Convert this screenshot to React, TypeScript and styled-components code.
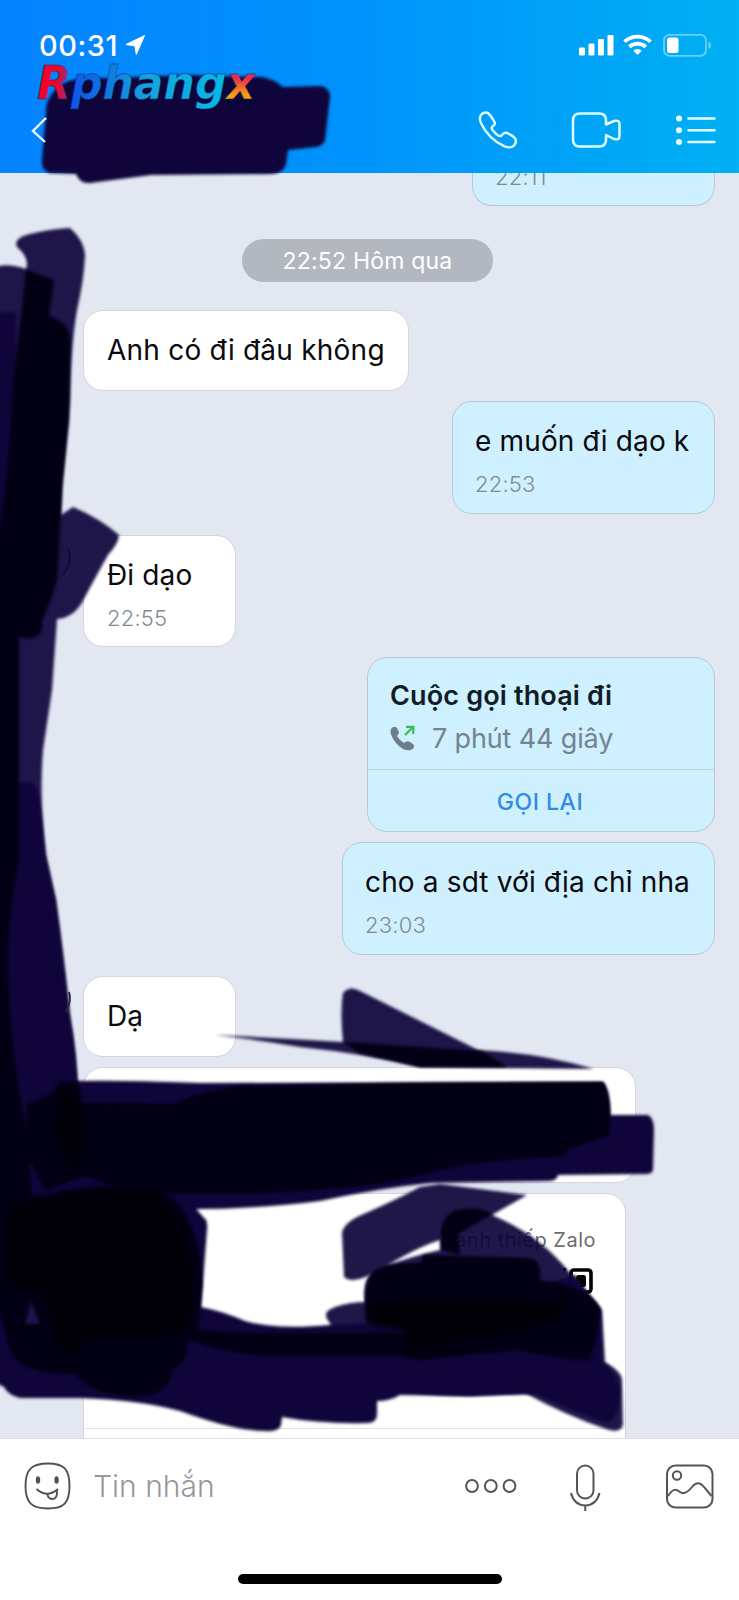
import React from 'react';
import styled, { createGlobalStyle } from 'styled-components';

const Global = createGlobalStyle`
  * { box-sizing: border-box; }
  body { margin: 0; background: #fff; }
`;

const Screen = styled.main`
  position: relative;
  display: flex;
  flex-direction: column;
  width: 739px;
  height: 1600px;
  overflow: hidden;
  background: #fff;
  font-family: Inter, 'Liberation Sans', sans-serif;
  color: #080a0d;
`;

const Header = styled.header`
  flex: none;
  height: 173px;
  padding: 27px 22px 0 31px;
  background: linear-gradient(90deg, #0583ff 0%, #0093fc 48%, #00b0f3 100%);
  color: #fff;
`;

const StatusBar = styled.div`
  display: flex;
  align-items: center;
  height: 36px;
  padding: 0 6px 0 8px;
`;

const Clock = styled.span`
  margin-right: 7px;
  font-size: 29px;
  font-weight: 500;
  letter-spacing: 0.5px;
`;

const Spacer = styled.div`
  flex: 1;
`;

const NavBar = styled.nav`
  display: flex;
  align-items: center;
  height: 44px;
  margin-top: 45px;
`;

const NavActions = styled.div`
  display: flex;
  align-items: center;
  gap: 52px;
`;

const Chat = styled.section`
  flex: none;
  display: flex;
  flex-direction: column;
  height: 1266px;
  padding: 0 24px 0 83px;
  overflow: hidden;
  background: #e2e7f1;
  border-bottom: 1px solid #dcdee3;
`;

const Bubble = styled.article<{ $mine?: boolean; $w: number; $h: number; $gap?: number }>`
  flex: none;
  align-self: ${(p) => (p.$mine ? 'flex-end' : 'flex-start')};
  width: ${(p) => p.$w}px;
  height: ${(p) => p.$h}px;
  margin-top: ${(p) => p.$gap ?? 0}px;
  padding: 22px 22px 0 ${(p) => (p.$mine ? 22 : 23)}px;
  border: 1.5px solid ${(p) => (p.$mine ? '#b2cdd9' : '#d5d6da')};
  border-radius: 20px;
  background: ${(p) => (p.$mine ? '#cff0ff' : '#fff')};
  white-space: nowrap;
`;

const ClippedBubble = styled(Bubble)`
  border-top: 0;
  border-radius: 0 0 20px 20px;
  padding-top: 0;
`;

const Text = styled.p<{ $track?: number }>`
  margin: 0;
  font-size: 28px;
  line-height: 34px;
  letter-spacing: ${(p) => p.$track ?? 0.15}px;
`;

const Time = styled.time<{ $top?: number }>`
  display: block;
  margin-top: ${(p) => p.$top ?? 13}px;
  font-size: 22px;
  line-height: 26px;
  font-weight: 300;
  letter-spacing: 0.2px;
  color: #7f8b94;
`;

const DayPill = styled.div`
  flex: none;
  align-self: flex-start;
  display: flex;
  align-items: center;
  justify-content: center;
  width: 251px;
  height: 43px;
  margin: 33px 0 0 159px;
  border-radius: 22px;
  background: #b3b7bf;
  color: #fff;
  font-size: 23px;
  letter-spacing: 0.2px;
`;

const CallCard = styled(Bubble)`
  display: flex;
  flex-direction: column;
  padding: 0;
`;

const CallInfo = styled.div`
  height: 112px;
  padding: 21px 22px 0;
  border-bottom: 1px solid #b9d8e5;
`;

const CallTitle = styled.h2`
  margin: 0;
  font-size: 27px;
  line-height: 34px;
  font-weight: 600;
  letter-spacing: 0.15px;
  color: #111d26;
`;

const CallMeta = styled.div`
  display: flex;
  align-items: center;
  gap: 17px;
  height: 42px;
  margin-top: 4px;
  font-size: 27px;
  letter-spacing: -0.15px;
  color: #74838f;
`;

const CallBack = styled.button`
  flex: 1;
  padding: 2px 2px 0 0;
  border: 0;
  background: none;
  font: 500 23px Inter, sans-serif;
  letter-spacing: 0.5px;
  color: #318ce2;
`;

const ContactCard = styled(Bubble)`
  display: flex;
  flex-direction: column;
  align-items: flex-end;
  padding: 33px 0 0;
`;

const CardLabel = styled.span`
  margin-right: 29px;
  font-size: 20px;
  line-height: 26px;
  letter-spacing: 0.5px;
  color: #6a6c70;
`;

const CardCode = styled.svg`
  flex: none;
  margin: 14px 32px 0 0;
`;

const CardFooter = styled.div`
  width: 100%;
  height: 30px;
  margin-top: auto;
  border-top: 1px solid #e5e6e8;
`;

const Composer = styled.footer`
  display: flex;
  align-items: center;
  height: 93px;
  padding: 0 25px 0 24px;
`;

const Placeholder = styled.span`
  flex: 1;
  margin-left: 21px;
  font-size: 30px;
  font-weight: 300;
  color: #94979c;
`;

const HomeBar = styled.div`
  width: 264px;
  height: 10px;
  margin: 42px 0 0 238px;
  border-radius: 5px;
  background: #000;
`;

const Overlay = styled.svg`
  position: absolute;
  inset: 0;
  pointer-events: none;
`;

const Ink = () => (
  <Overlay width="739" height="1600" viewBox="0 0 739 1600">
    <defs>
      <filter id="soft" x="-5%" y="-5%" width="110%" height="110%" colorInterpolationFilters="sRGB">
        <feGaussianBlur stdDeviation="1.5" />
      </filter>
      <filter id="softer" x="-5%" y="-5%" width="110%" height="110%" colorInterpolationFilters="sRGB">
        <feGaussianBlur stdDeviation="4" />
      </filter>
      <linearGradient id="word" gradientUnits="userSpaceOnUse" x1="68" y1="0" x2="228" y2="0">
        <stop offset="0" stopColor="#0b52ee" />
        <stop offset=".22" stopColor="#0f74dc" />
        <stop offset=".5" stopColor="#16a4dc" />
        <stop offset="1" stopColor="#04b8e6" />
      </linearGradient>
      <linearGradient id="red" gradientUnits="userSpaceOnUse" x1="37" y1="0" x2="70" y2="0">
        <stop offset=".62" stopColor="#f0042c" />
        <stop offset="1" stopColor="#7c3a90" />
      </linearGradient>
      <linearGradient id="fire" gradientUnits="userSpaceOnUse" x1="0" y1="73" x2="0" y2="99">
        <stop offset=".2" stopColor="#e82c50" />
        <stop offset=".85" stopColor="#f5a00c" />
      </linearGradient>
    </defs>

    {/* single passes of the marker */}
    <g filter="url(#soft)" fill="#0b0138" opacity=".91">
      <path d="M-6 268Q5 262 26 269Q30 258 17 247Q13 238 30 234Q50 229 70 228Q84 240 85 255Q84 280 77 310Q71 345 70 400L62 480L61 515L73 507Q99 518 119 535Q119 543 108 555Q94 580 85 597Q75 618 57 619L52 690L43 750Q39 800 46 855L56 900Q63 950 70 1015Q77 1055 78 1100L-6 1100Z" />
      <path d="M215 1035Q280 1038 343 1042Q340 1012 343 993Q350 985 360 991L478 1050Q540 1053 594 1069L420 1067Q360 1053 300 1047Q260 1040 215 1035Z" />
      <path d="M440 1184L527 1195L492 1215Q540 1235 570 1273L602 1310L605 1362Q622 1372 622 1380L623 1425Q620 1434 606 1429Q565 1415 525 1393L470 1396Q330 1395 330 1323Q320 1312 335 1307Q350 1302 365 1302Q362 1280 372 1274Q352 1284 344 1277L342 1232Q345 1223 357 1217Q400 1198 420 1187ZM440 1240Q420 1246 386 1266Q416 1255 440 1250Z" fillRule="evenodd" />
    </g>

    {/* denser areas */}
    <g filter="url(#soft)" fill="#10053a">
      <path d="M50 97Q60 80 80 79L190 75L262 77Q274 79 283 87L320 86Q330 87 330 97L325 140Q323 146 316 147L288 150L286 164Q284 173 272 174L151 175L90 183Q80 184 76 174L50 173Q41 171 42 160L46 112Q46 102 50 97Z" />
      <path d="M-6 312H16V782H28Q36 782 38 795Q42 815 45 855L55 900Q62 950 69 1015Q77 1055 78 1100L-6 1100Z" />
      <path d="M-6 1075L78 1081Q120 1080 200 1083L603 1082Q610 1091 610 1115H648Q654 1118 654 1130L653 1170Q652 1174 646 1174L558 1175Q557 1181 548 1181L430 1183Q380 1188 320 1201Q245 1211 150 1209L-6 1205Z" />
      <path d="M-6 1190H180L204 1218Q208 1220 207 1230L201 1307Q225 1312 245 1321Q275 1330 330 1325L430 1320L575 1275L600 1310L602 1362Q618 1373 620 1390Q619 1425 604 1422Q570 1410 535 1394L470 1396L400 1395Q390 1401 377 1401V1414Q377 1423 367 1423Q320 1424 282 1417L281 1425Q279 1432 265 1431Q235 1431 180 1411Q140 1400 80 1398H20Q8 1395 4 1387L-6 1382Z" />
    </g>

    {/* overlapping passes */}
    <g filter="url(#soft)" fill="#020014">
      <path d="M26 270L54 280L49 316Q70 323 70 340L69 420L62 490L57 580Q48 610 42 620V630Q36 642 19 637V860Q10 900 8 950Q8 1050 27 1130L32 1200H-6V560Q10 480 13 380L22 310Z" />
      <path d="M27 1105L54 1092L60 1082H78L80 1103L175 1104Q190 1094 240 1086L420 1083L603 1082Q609 1090 610 1110V1135L567 1150Q567 1157 550 1157Q470 1160 410 1178Q330 1194 200 1194Q120 1193 85 1176L45 1190L27 1155Z" />
      <path d="M343 1042L481 1051L508 1067H420L360 1053Z" />
      <path d="M-6 1200L50 1195Q90 1183 150 1188Q175 1195 183 1211Q201 1240 202 1285L198 1330Q240 1334 330 1333H410L400 1326L366 1322Q362 1280 375 1270Q390 1262 420 1263L424 1255L530 1258Q542 1260 540 1280Q590 1287 600 1308Q598 1345 588 1360Q560 1360 520 1350Q470 1354 430 1359Q410 1361 403 1356H260Q225 1352 187 1340Q190 1360 173 1370Q168 1395 140 1396Q95 1398 75 1374Q20 1375 10 1350Q2 1320 -6 1300Z" />
      <path d="M442 1250L441 1230Q445 1209 465 1209Q478 1207 492 1214L458 1234L460 1255Z" />
    </g>
    <g filter="url(#softer)" fill="#000006">
      <path d="M8 1208Q60 1190 140 1189Q172 1195 186 1235Q196 1300 186 1332L82 1340L70 1360Q50 1340 47 1295L8 1283Z" />
      <path d="M60 1090H80V1175Q60 1160 58 1130Z" />
      <path d="M372 1303Q450 1297 570 1303Q560 1325 490 1335Q430 1348 412 1348L408 1331L370 1323Z" />
    </g>
    <path d="M25 1324L31 1301L40 1324Z" fill="#20124a" filter="url(#soft)" />
    <path d="M69 992Q72 1000 66 1012" fill="none" stroke="#302b42" strokeWidth="2" />
    <path d="M69 550Q72 563 63 575" fill="none" stroke="#120830" strokeWidth="1.5" />

    <path d="M46 118L33 131L45 142" fill="none" stroke="#f5fbff" strokeWidth="2.3" />
    <text
      x="37"
      y="99"
      textLength="218"
      lengthAdjust="spacingAndGlyphs"
      fontFamily="'DejaVu Sans', sans-serif"
      fontWeight="700"
      fontStyle="italic"
      fontSize="46"
      stroke="#0b2a6e"
      strokeOpacity=".55"
      strokeWidth=".8"
    >
      <tspan fill="url(#red)">R</tspan>
      <tspan fill="url(#word)">phang</tspan>
      <tspan fill="url(#fire)">x</tspan>
    </text>
  </Overlay>
);

export default function App() {
  return (
    <>
      <Global />
      <Screen>
        <Header>
          <StatusBar>
            <Clock>00:31</Clock>
            <svg width="21" height="20" viewBox="0 0 20 20">
              <path d="M19 0.5L10.8 19.5L9.5 11L0.5 9.5Z" fill="#fff" stroke="#fff" strokeLinejoin="round" />
            </svg>
            <Spacer />
            <svg width="133" height="24" viewBox="0 0 133 24">
              <g fill="#fff">
                <rect x="1" y="14.5" width="6" height="8" rx="1.3" />
                <rect x="10.5" y="10.5" width="6" height="12" rx="1.3" />
                <rect x="20" y="6" width="6" height="16.5" rx="1.3" />
                <rect x="29.5" y="2" width="6" height="20.5" rx="1.3" />
                <path d="M55 18.5m-4.2-.8a6 6 0 0 1 8.4 0L55 22Z" transform="translate(4.5 0)" />
              </g>
              <g fill="none" stroke="#fff" strokeWidth="3.7">
                <path d="M46.5 8.7a19 19 0 0 1 26 0" />
                <path d="M51.3 13.8a12 12 0 0 1 16.4 0" />
              </g>
              <rect x="86" y="1.8" width="42" height="21" rx="5.5" fill="none" stroke="#65d2ff" strokeWidth="1.8" />
              <rect x="89" y="4.6" width="11.5" height="15.5" rx="2.5" fill="#fff" />
              <path d="M130.500 8.500q2.500 1 2.500 3.800t-2.500 3.800Z" fill="#72d5ff" />
            </svg>
          </StatusBar>
          <NavBar>
            <Spacer />
            <NavActions>
              <svg width="42" height="40" viewBox="0 0 42 40" fill="none" stroke="#e2ffff" strokeWidth="2.4" strokeLinejoin="round">
                <path d="M3.600 5.500Q6.500 1.500 11 3Q13.500 5 17.500 12Q18.600 14.500 16 16Q13.800 17.700 15.500 20Q19 24.500 22 26Q24.500 26.500 26 24Q27.500 22 30.500 23.200Q35.500 25.500 38.200 28.500Q40 32 37 35.500Q34 38.800 27.500 36.400Q11.500 29 4.200 13.500Q1.800 8.800 3.600 5.500Z" />
              </svg>
              <svg width="52" height="40" viewBox="0 0 52 40" fill="none" stroke="#e2ffff" strokeWidth="2.5" strokeLinejoin="round">
                <path d="M9 3.500H28Q35 3.500 35 10.500V14.500L43 11Q48.500 9.500 48.500 14V26Q48.500 30.500 43 29L35 25V29.500Q35 36.500 28 36.500H9Q2 36.500 2 29.500V10.500Q2 3.500 9 3.500Z" />
              </svg>
              <svg width="42" height="40" viewBox="0 0 42 40" fill="#e6ffff" stroke="#e6ffff">
                <g stroke="none">
                  <circle cx="4" cy="8.500" r="3" />
                  <circle cx="4" cy="20.300" r="3" />
                  <circle cx="4" cy="32" r="3" />
                </g>
                <path d="M13.500 8.500H39.500M13.500 20.300H39.500M13.500 32H39.500" strokeWidth="2.6" strokeLinecap="round" />
              </svg>
            </NavActions>
          </NavBar>
        </Header>

        <Chat>
          <ClippedBubble $mine $w={243} $h={33}>
            <Time $top={-9}>22:11</Time>
          </ClippedBubble>
          <DayPill>22:52 Hôm qua</DayPill>
          <Bubble $w={326} $h={81} $gap={28}>
            <Text $track={0.23}>Anh có đi đâu không</Text>
          </Bubble>
          <Bubble $mine $w={263} $h={113} $gap={10}>
            <Text>e muốn đi dạo k</Text>
            <Time>22:53</Time>
          </Bubble>
          <Bubble $w={153} $h={112} $gap={21}>
            <Text>Đi dạo</Text>
            <Time>22:55</Time>
          </Bubble>
          <CallCard $mine $w={348} $h={175} $gap={10}>
            <CallInfo>
              <CallTitle>Cuộc gọi thoại đi</CallTitle>
              <CallMeta>
                <svg width="25" height="26" viewBox="0 0 25 26">
                  <path d="M1 4Q4 0 7 3L9 7Q9 9 7 11Q10 16 14 18Q17 15 20 17L24 20Q25 23 21 25Q14 27 6 18Q-1 9 1 4Z" fill="#6d7d89" />
                  <path d="M15 10L23 2M16 1.800H23.300V9" fill="none" stroke="#35bd4b" strokeWidth="2.2" />
                </svg>
                <span>7 phút 44 giây</span>
              </CallMeta>
            </CallInfo>
            <CallBack>GỌI LẠI</CallBack>
          </CallCard>
          <Bubble $mine $w={373} $h={113} $gap={10}>
            <Text>cho a sdt với địa chỉ nha</Text>
            <Time>23:03</Time>
          </Bubble>
          <Bubble $w={153} $h={81} $gap={21}>
            <Text>Dạ</Text>
          </Bubble>
          <Bubble $w={553} $h={116} $gap={10} />
          <ContactCard $w={543} $h={266} $gap={10}>
            <CardLabel>Danh thiếp Zalo</CardLabel>
            <CardCode width="120" height="130" viewBox="0 0 120 130">
              <rect x="98" y="3" width="20" height="22" rx="3" fill="none" stroke="#000" strokeWidth="3.6" />
              <rect x="103" y="8" width="10" height="12" rx="2.5" />
              <rect x="90" y="1" width="3" height="3" />
              <path d="M24 122h3v2h-3zM30 120h7v4h-7zM42 120h3v4h-3z" />
            </CardCode>
            <CardFooter />
          </ContactCard>
        </Chat>

        <Composer>
          <svg width="48" height="48" viewBox="0 0 48 48" fill="none" stroke="#505050" strokeWidth="1.9">
            <path d="M24 1.500C40 1.500 45.500 7 45.500 24S40 46.500 24 46.500S1.500 41 1.500 24S8 1.500 24 1.500Z" />
            <ellipse cx="14" cy="18" rx="2.200" ry="3.800" fill="#505050" stroke="none" />
            <ellipse cx="32.600" cy="18" rx="2.200" ry="3.800" fill="#505050" stroke="none" />
            <path d="M12.500 27Q23 36.500 34 27M23.500 31.500Q23.500 37 28.500 37Q33.500 37 33 28.500" />
          </svg>
          <Placeholder>Tin nhắn</Placeholder>
          <svg width="254" height="50" viewBox="0 0 254 50" fill="none" stroke="#555" strokeWidth="2">
            <circle cx="12" cy="25" r="5.900" />
            <circle cx="30.800" cy="25" r="5.900" />
            <circle cx="49.500" cy="25" r="5.900" />
            <rect x="117" y="4.500" width="16.500" height="33" rx="8.250" />
            <path d="M111 32Q114 44 125.250 44.500Q136.500 44 139.500 32M125.250 44.500V50" />
            <rect x="207" y="4.500" width="45.500" height="42" rx="8.500" />
            <circle cx="217" cy="14.500" r="4.200" />
            <path d="M208 35C213 27 216 28 220 31C224 34 228 31 232 26C237 20 241 22 244 26L251.500 35" />
          </svg>
        </Composer>
        <HomeBar />
        <Ink />
      </Screen>
    </>
  );
}
